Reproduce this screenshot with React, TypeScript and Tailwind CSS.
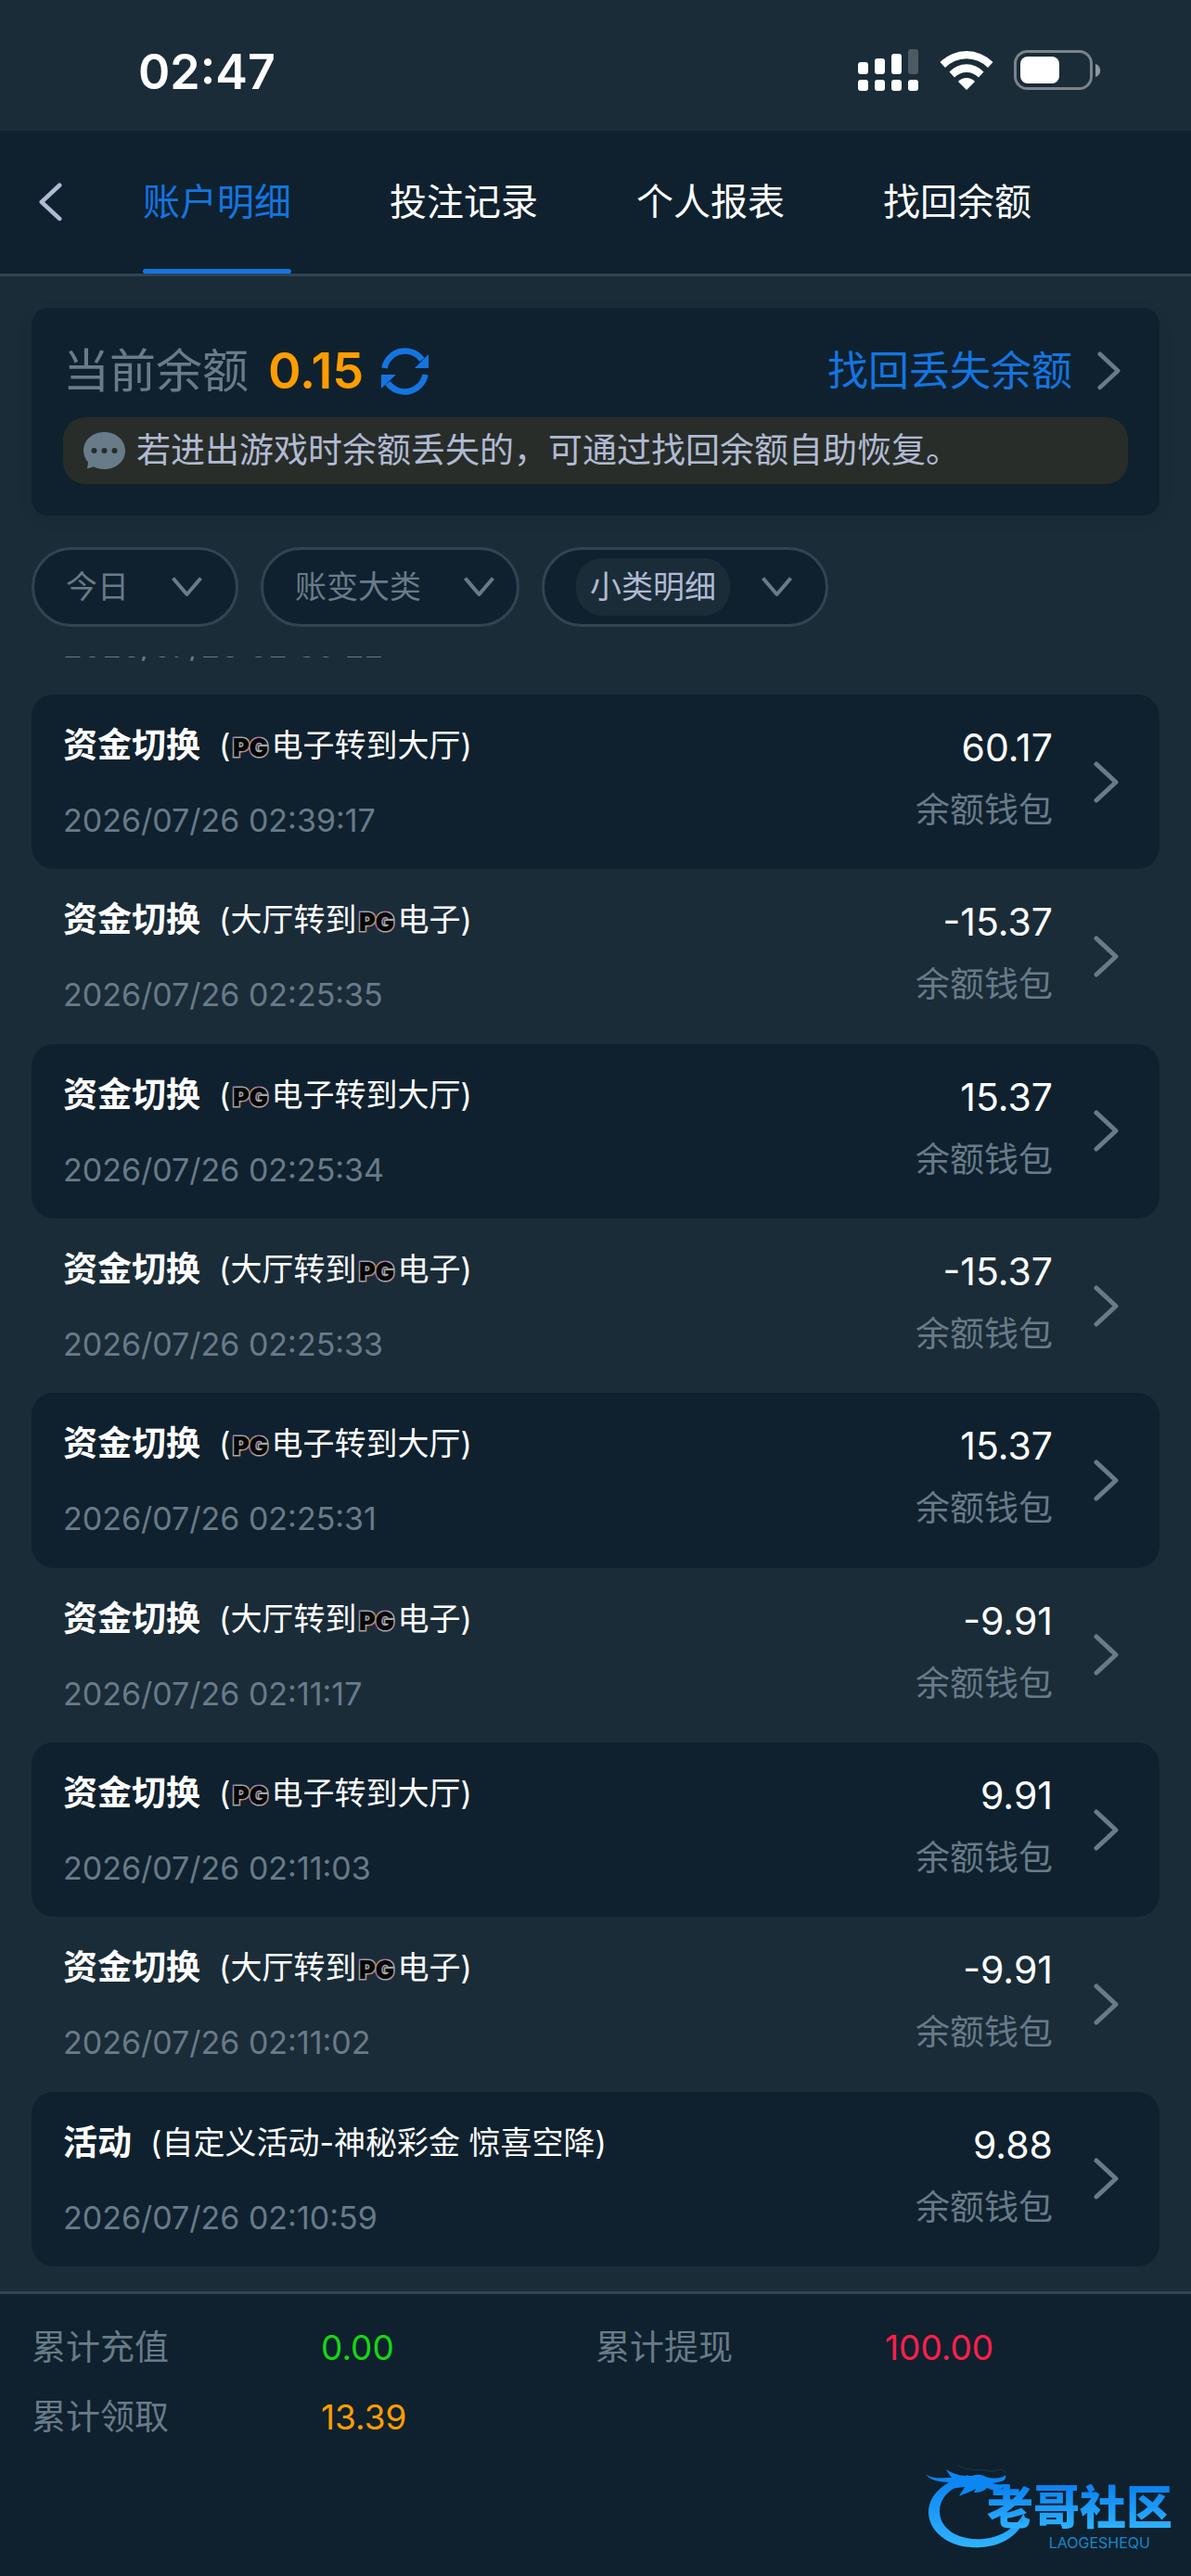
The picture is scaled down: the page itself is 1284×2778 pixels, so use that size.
/**
 * Account details page
 * Layout: status bar, tab bar, balance card, filters, record list, totals footer
 */
import { useState } from "react";
import clsx from "clsx";

const TABS = ["账户明细", "投注记录", "个人报表", "找回余额"];

type RecordItem = {
  title: string;
  // "PG" inside the note is drawn as the provider logo
  note: string;
  time: string;
  amount: string;
};

const TO_LOBBY = "(PG电子转到大厅)";
const TO_GAME = "(大厅转到PG电子)";

const RECORDS: RecordItem[] = [
  { title: "资金切换", note: TO_LOBBY, time: "2026/07/26 02:39:17", amount: "60.17" },
  { title: "资金切换", note: TO_GAME, time: "2026/07/26 02:25:35", amount: "-15.37" },
  { title: "资金切换", note: TO_LOBBY, time: "2026/07/26 02:25:34", amount: "15.37" },
  { title: "资金切换", note: TO_GAME, time: "2026/07/26 02:25:33", amount: "-15.37" },
  { title: "资金切换", note: TO_LOBBY, time: "2026/07/26 02:25:31", amount: "15.37" },
  { title: "资金切换", note: TO_GAME, time: "2026/07/26 02:11:17", amount: "-9.91" },
  { title: "资金切换", note: TO_LOBBY, time: "2026/07/26 02:11:03", amount: "9.91" },
  { title: "资金切换", note: TO_GAME, time: "2026/07/26 02:11:02", amount: "-9.91" },
  {
    title: "活动",
    note: "(自定义活动-神秘彩金 惊喜空降)",
    time: "2026/07/26 02:10:59",
    amount: "9.88",
  },
];

const TOTALS = [
  { label: "累计充值", value: "0.00", color: "text-[#16d616]" },
  { label: "累计提现", value: "100.00", color: "text-[#ff1f4b]" },
  { label: "累计领取", value: "13.39", color: "text-[#ff9d00]" },
];

function Chevron({ className }: { className?: string }) {
  return (
    <svg viewBox="0 0 27 45" fill="none" className={clsx("shrink-0", className)} aria-hidden="true">
      <path
        d="M3 3 L24 22.5 L3 42"
        stroke="currentColor"
        strokeWidth="5"
        strokeLinecap="round"
        strokeLinejoin="round"
      />
    </svg>
  );
}

function ChevronDown() {
  return (
    <svg viewBox="0 0 33 22" fill="none" className="w-[33px] shrink-0" aria-hidden="true">
      <path d="M1.5 1.5 L16.5 19 L31.5 1.5" stroke="currentColor" strokeWidth="4" strokeLinejoin="round" />
    </svg>
  );
}

function StatusBar() {
  return (
    <header className="flex h-[141px] items-center justify-between pr-[97px] pl-[149px] text-white">
      <time className="mt-[14px] text-[52px] leading-[52px] font-semibold">02:47</time>
      <div className="mt-[10px] flex items-center">
        {/* Dual SIM signal */}
        <svg viewBox="0 0 65 45" className="w-[65px]" fill="currentColor" aria-hidden="true">
          <rect x="0" y="14" width="11" height="13" rx="3" />
          <rect x="18" y="10" width="11" height="17" rx="3" />
          <rect x="36" y="5" width="11" height="22" rx="3" />
          <rect x="54" y="0" width="11" height="27" rx="3" opacity="0.22" />
          <rect x="0" y="33" width="11" height="12" rx="3" />
          <rect x="18" y="33" width="11" height="12" rx="3" />
          <rect x="36" y="33" width="11" height="12" rx="3" />
          <rect x="54" y="33" width="11" height="12" rx="3" />
        </svg>
        <svg viewBox="0 0 58 42" className="ml-[23px] w-[58px]" fill="currentColor" aria-hidden="true">
          <path d="M0.5 12 A40 40 0 0 1 57.5 12 L52 18 A32 32 0 0 0 6 18 Z" />
          <path d="M10.5 22.5 A25 25 0 0 1 47.5 22.5 L42 28.5 A18 18 0 0 0 16 28.5 Z" />
          <path d="M20 33 A12 12 0 0 1 38 33 L29 42 Z" />
        </svg>
        <svg viewBox="0 0 94 43" className="ml-[22px] w-[94px]" fill="currentColor" aria-hidden="true">
          <rect
            x="1.5"
            y="1.5"
            width="82"
            height="40"
            rx="13"
            fill="none"
            stroke="currentColor"
            strokeWidth="3"
            opacity="0.42"
          />
          <rect x="7" y="7" width="42" height="29" rx="8" />
          <path d="M88 15 C95 17 95 27 88 29 Z" opacity="0.5" />
        </svg>
      </div>
    </header>
  );
}

function TabBar() {
  const [active, setActive] = useState(TABS[0]);

  return (
    <nav className="flex h-[157px] items-stretch border-b-[3px] border-[#2f4553] bg-[#0f212e]">
      <button type="button" aria-label="返回" className="flex items-center pr-[87px] pl-[42px] text-[#b1bad3]">
        <Chevron className="w-[25px] rotate-180" />
      </button>
      <div className="flex gap-[106px]">
        {TABS.map((tab) => (
          <button
            key={tab}
            type="button"
            onClick={() => setActive(tab)}
            className={clsx(
              "flex flex-col text-[40px] whitespace-nowrap",
              tab === active ? "text-[#1475e1]" : "text-white",
            )}
          >
            <span className="flex flex-1 items-center pt-[5px]">{tab}</span>
            <span className={clsx("h-[5px] w-full rounded-full", tab === active && "bg-[#1475e1]")} />
          </button>
        ))}
      </div>
    </nav>
  );
}

function BalanceCard() {
  return (
    <section className="mx-[34px] mt-[34px] rounded-[18px] bg-[#0f212e] px-[34px] py-[34px] shadow-[0_4px_18px_rgba(0,0,0,0.06)]">
      <div className="flex h-[68px] items-center">
        <h1 className="text-[50px] leading-[68px] text-[#687b88]">当前余额</h1>
        <span className="ml-[21px] text-[54px] leading-[68px] font-semibold text-[#ff9d00]">0.15</span>
        <button type="button" aria-label="刷新余额" className="ml-[19px] text-[#1475e1]">
          <svg viewBox="0 0 51 51" className="w-[51px]" fill="none" aria-hidden="true">
            <path d="M3.5 22 A22.5 22.5 0 0 1 44 13" stroke="currentColor" strokeWidth="6.5" />
            <path d="M47.5 29 A22.5 22.5 0 0 1 7 38" stroke="currentColor" strokeWidth="6.5" />
            <path d="M51 7 V22 H36 Z" fill="currentColor" />
            <path d="M0 44 V29 H16 Z" fill="currentColor" />
          </svg>
        </button>
        <a href="#recover" className="ml-auto flex items-center gap-[27px] pr-[8px] text-[#1475e1]">
          <span className="text-[44px] leading-[68px]">找回丢失余额</span>
          <Chevron className="w-[25px] text-[#687b88]" />
        </a>
      </div>

      <div className="mt-[16px] flex min-h-[72px] items-center gap-[12px] rounded-[24px] bg-[#282d29] px-[22px]">
        <svg viewBox="0 0 45 40" className="w-[45px] shrink-0" aria-hidden="true">
          <path
            d="M22.5 0 C35 0 45 8.5 45 20 C45 31.5 35 40 22.5 40 C18 40 14 39 11 37.3 L4 39.5 L5 32.5 C2 29 0 25 0 20 C0 8.5 10 0 22.5 0 Z"
            fill="#687b88"
          />
          <circle cx="11.5" cy="20" r="3" fill="#282d29" />
          <circle cx="22.5" cy="20" r="3" fill="#282d29" />
          <circle cx="33.5" cy="20" r="3" fill="#282d29" />
        </svg>
        <p className="text-[37px] leading-[50px] text-[#b1bad3]">
          若进出游戏时余额丢失的，可通过找回余额自助恢复。
        </p>
      </div>
    </section>
  );
}

type FilterProps = {
  label: string;
  options: string[];
  chip?: boolean;
  className: string;
};

function Filter({ label, options, chip, className }: FilterProps) {
  return (
    <label
      className={clsx(
        "flex h-[86px] items-center gap-[34px] rounded-full border-[3px] border-[#2f4553] bg-[#0f212e] pl-[34px] text-[#687b88]",
        className,
      )}
    >
      <select
        aria-label={label}
        className={clsx(
          "appearance-none text-[34px] leading-[50px] outline-none",
          chip ? "rounded-[28px] bg-[#1a2c38] px-[15px] py-[6px] text-[#b1bad3]" : "mr-[12px]",
        )}
      >
        {options.map((option) => (
          <option key={option}>{option}</option>
        ))}
      </select>
      <ChevronDown />
    </label>
  );
}

// Provider logo: black letters with a bright multi-colour edge
function PgLogo() {
  return (
    <svg viewBox="0 0 44 44" className="h-[44px] w-[44px]" role="img" aria-label="PG">
      <defs>
        <linearGradient id="pg-edge" gradientUnits="userSpaceOnUse" x1="2" y1="12" x2="42" y2="34">
          <stop offset="0" stopColor="#7a4df0" />
          <stop offset="0.1" stopColor="#9aa0a4" />
          <stop offset="0.36" stopColor="#a3a8ab" />
          <stop offset="0.42" stopColor="#d9773f" />
          <stop offset="0.48" stopColor="#9aa0a4" />
          <stop offset="0.58" stopColor="#c04fb8" />
          <stop offset="0.64" stopColor="#a3a8ab" />
          <stop offset="0.88" stopColor="#a3a8ab" />
          <stop offset="1" stopColor="#f0622d" />
        </linearGradient>
      </defs>
      <text
        x="22"
        y="34"
        textAnchor="middle"
        fontSize="27"
        fontWeight="900"
        fill="#050505"
        stroke="url(#pg-edge)"
        strokeWidth="3"
        paintOrder="stroke"
      >
        PG
      </text>
    </svg>
  );
}

function Note({ text }: { text: string }) {
  const [before, after] = text.split("PG");
  return (
    <span className="flex items-center text-[34px]">
      {before}
      {after !== undefined && <PgLogo />}
      {after}
    </span>
  );
}

function RecordRow({ item, dark }: { item: RecordItem; dark: boolean }) {
  return (
    <li className="flex flex-1">
      <a
        href="#detail"
        className={clsx(
          "flex flex-1 items-center rounded-[24px] py-[24px] pr-[44px] pl-[34px]",
          dark && "bg-[#0f212e]",
        )}
      >
        <div className="flex flex-1 flex-col gap-[34px]">
          <div className="flex items-center gap-[20px] leading-[50px] text-white">
            <span className="text-[37px] font-bold">{item.title}</span>
            <Note text={item.note} />
          </div>
          <time className="text-[34px] leading-[44px] text-[#687b88]">{item.time}</time>
        </div>
        <div className="flex flex-col items-end gap-[18px] pb-[6px] leading-[50px]">
          <span className="text-[41px] text-white">{item.amount}</span>
          <span className="text-[37px] text-[#687b88]">余额钱包</span>
        </div>
        <Chevron className="ml-[44px] w-[27px] text-[#687b88]" />
      </a>
    </li>
  );
}

function CommunityLogo() {
  return (
    <div className="absolute right-[20px] bottom-[28px] h-[96px] w-[266px]">
      <svg viewBox="0 0 266 96" className="absolute inset-0" aria-hidden="true">
        <defs>
          <linearGradient id="dragon" x1="0" y1="0" x2="0" y2="1">
            <stop offset="0" stopColor="#0a7ff0" />
            <stop offset="1" stopColor="#2fb4ff" />
          </linearGradient>
        </defs>
        {/* Body ring */}
        <path
          d="M46 15 C18 22 2 38 3 57 C5 80 30 95 59 93 C83 92 101 79 107 62 L106 56 C97 72 82 82 62 84 C36 86 15 74 15 54 C15 40 26 29 44 23 Z"
          fill="url(#dragon)"
        />
        {/* Head, horns and whiskers */}
        <path
          d="M0 14 C8 20 18 18 28 18 C26 15 24 13 22 9 C32 16 42 16 50 16 C58 13 62 16 68 18 C75 19 82 19 86 15 C87 20 84 22 78 23 L72 24 C78 26 82 25 85 25 C84 31 78 32 71 31 L66 29 C63 33 57 34 52 34 L54 30 C47 34 42 35 36 38 C38 34 40 32 42 28 C35 29 32 29 28 30 C32 26 32 25 33 23 C20 23 6 23 0 14 Z"
          fill="#0b86f2"
        />
        <path d="M34 4 C44 12 60 8 72 11 C80 10 82 6 86 13" fill="none" stroke="#173a55" strokeWidth="1" />
      </svg>
      <p className="absolute top-[25px] right-0 bg-gradient-to-b from-[#0a7ff0] to-[#2fb4ff] bg-clip-text text-[50px] leading-[50px] font-black whitespace-nowrap text-transparent">
        老哥社区
      </p>
      <p className="absolute right-[24px] bottom-0 text-[16px] leading-[16px] text-[#1a86cc]">LAOGESHEQU</p>
    </div>
  );
}

export default function App() {
  return (
    <div
      lang="zh-CN"
      className="flex min-h-screen flex-col bg-[#1a2c38] font-['Inter','Noto_Sans_CJK_SC',sans-serif]"
    >
      <StatusBar />
      <TabBar />
      <BalanceCard />

      <div className="mx-[34px] mt-[34px] flex gap-[24px]">
        <Filter label="日期" options={["今日", "昨日"]} className="pr-[36px]" />
        <Filter label="账变大类" options={["账变大类"]} className="pr-[24px]" />
        <Filter label="小类明细" options={["小类明细"]} chip className="pr-[36px]" />
      </div>

      <main className="mx-[34px] mt-[32px] mb-[27px] flex flex-1 flex-col">
        {/* Tail of the row scrolled under the filters */}
        <div className="h-[41px] overflow-hidden pl-[34px]">
          <p className="-mt-[33px] text-[34px] leading-[44px] text-[#687b88]">2026/07/26 02:39:22</p>
        </div>
        <ul className="flex flex-1 flex-col">
          {RECORDS.map((item, i) => (
            <RecordRow key={item.time} item={item} dark={i % 2 === 0} />
          ))}
        </ul>
      </main>

      <footer className="relative min-h-[307px] border-t-[3px] border-[#2f4553] bg-[#0f212e] px-[34px] pt-[33px]">
        <dl className="grid grid-cols-2 gap-y-[25px] text-[37px] leading-[50px]">
          {TOTALS.map((total) => (
            <div key={total.label} className="flex">
              <dt className="w-1/2 text-[#687b88]">{total.label}</dt>
              <dd className={clsx("pl-[8px]", total.color)}>{total.value}</dd>
            </div>
          ))}
        </dl>
        <CommunityLogo />
      </footer>
    </div>
  );
}
